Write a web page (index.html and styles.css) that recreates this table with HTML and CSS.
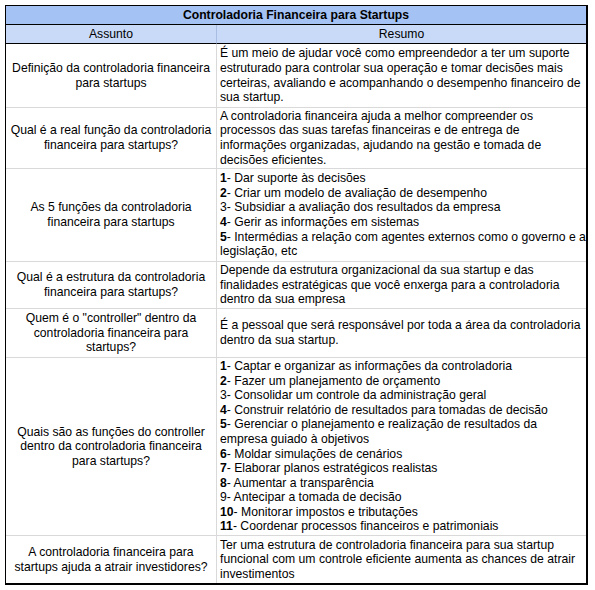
FILE: index.html
```html
<!DOCTYPE html>
<html lang="pt">
<head>
<meta charset="utf-8">
<title>Controladoria Financeira para Startups</title>
<link rel="stylesheet" href="styles.css">
</head>
<body>
<div class="sheet">
  <div class="title"><span>Controladoria Financeira para Startups</span></div>
  <div class="head head-left"><span>Assunto</span></div>
  <div class="head"><span>Resumo</span></div>

  <div class="q"><span>Definição da controladoria financeira<br>para startups</span></div>
  <div class="a"><span class="tight">É um meio de ajudar você como empreendedor a ter um suporte<br>estruturado para controlar sua operação e tomar decisões mais<br>certeiras, avaliando e acompanhando o desempenho financeiro de<br>sua startup.</span></div>

  <div class="q"><span>Qual é a real função da controladoria<br>financeira para startups?</span></div>
  <div class="a"><span>A controladoria financeira ajuda a melhor compreender os<br>processos das suas tarefas financeiras e de entrega de<br>informações organizadas, ajudando na gestão e tomada de<br>decisões eficientes.</span></div>

  <div class="q"><span>As 5 funções da controladoria<br>financeira para startups</span></div>
  <div class="a"><span><b>1</b>- Dar suporte às decisões<br><b>2</b>- Criar um modelo de avaliação de desempenho<br>3- Subsidiar a avaliação dos resultados da empresa<br><b>4</b>- Gerir as informações em sistemas<br><b>5</b>- Intermédias a relação com agentes externos como o governo e a<br>legislação, etc</span></div>

  <div class="q"><span>Qual é a estrutura da controladoria<br>financeira para startups?</span></div>
  <div class="a"><span>Depende da estrutura organizacional da sua startup e das<br>finalidades estratégicas que você enxerga para a controladoria<br>dentro da sua empresa</span></div>

  <div class="q"><span>Quem é o "controller" dentro da<br>controladoria financeira para<br>startups?</span></div>
  <div class="a"><span>É a pessoal que será responsável por toda a área da controladoria<br>dentro da sua startup.</span></div>

  <div class="q"><span>Quais são as funções do controller<br>dentro da controladoria financeira<br>para startups?</span></div>
  <div class="a"><span><b>1</b>- Captar e organizar as informações da controladoria<br><b>2</b>- Fazer um planejamento de orçamento<br>3- Consolidar um controle da administração geral<br><b>4</b>- Construir relatório de resultados para tomadas de decisão<br><b>5</b>- Gerenciar o planejamento e realização de resultados da<br>empresa guiado à objetivos<br><b>6</b>- Moldar simulações de cenários<br><b>7</b>- Elaborar planos estratégicos realistas<br><b>8</b>- Aumentar a transparência<br>9- Antecipar a tomada de decisão<br><b>10</b>- Monitorar impostos e tributações<br><b>11</b>- Coordenar processos financeiros e patrimoniais</span></div>

  <div class="q last"><span>A controladoria financeira para<br>startups ajuda a atrair investidores?</span></div>
  <div class="a last"><span>Ter uma estrutura de controladoria financeira para sua startup<br>funcional com um controle eficiente aumenta as chances de atrair<br>investimentos</span></div>
</div>
</body>
</html>
```

FILE: styles.css
```css
html, body {
  margin: 0;
  padding: 0;
  background: #ffffff;
}

body {
  font-family: "Liberation Sans", Arial, sans-serif;
  font-size: 12.2px;
  color: #000000;
}

.sheet {
  margin: 5px 0 0 5px;
  width: 583px;
  box-sizing: border-box;
  border-left: 1px solid #000;
  border-top: 1px solid #000;
  border-right: 2px solid #000;
  border-bottom: 2px solid #000;
  display: grid;
  grid-template-columns: 211px 369px;
  grid-template-rows: 19px 19px 64px 61px 93px 47px 49px 178px 47px;
}

.sheet > div {
  box-sizing: border-box;
  display: flex;
  align-items: center;
  white-space: nowrap;
  line-height: 14.6px;
  overflow: hidden;
}

.title {
  grid-column: 1 / 3;
  justify-content: center;
  font-weight: bold;
  background: #a4c2f4;
  border-bottom: 1px solid #000;
}

.head {
  justify-content: center;
  background: #c9daf8;
  border-bottom: 1px solid #000;
}

.head-left {
  border-right: 1px solid #a9bde2;
}

.q {
  justify-content: center;
  text-align: center;
  border-right: 1px solid #d9d9d9;
  border-bottom: 1px solid #d9d9d9;
  padding: 0 3px;
}

.a {
  justify-content: flex-start;
  text-align: left;
  border-bottom: 1px solid #d9d9d9;
  padding: 0 3px;
}

.q.last,
.a.last {
  border-bottom: none;
}

b {
  font-weight: bold;
}
```
